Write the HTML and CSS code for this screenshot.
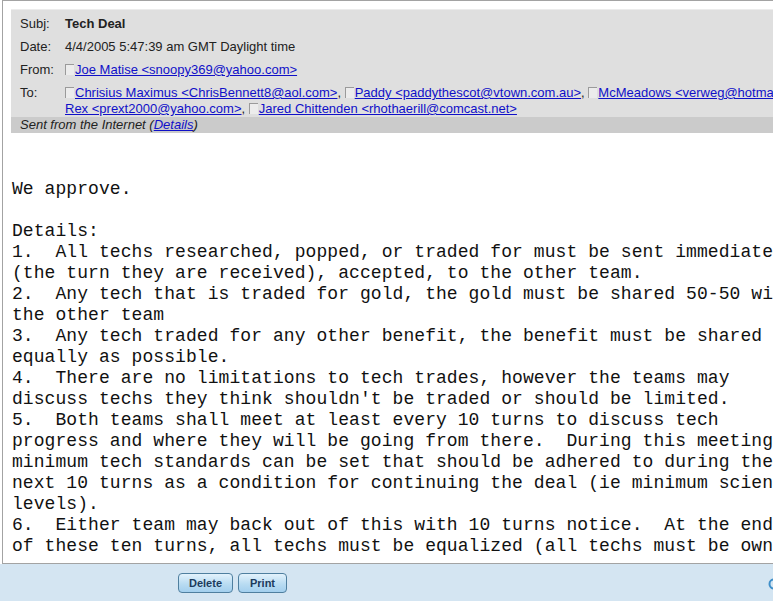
FILE: index.html
```html
<!DOCTYPE html>
<html>
<head>
<meta charset="utf-8">
<title>Tech Deal</title>
<link rel="stylesheet" href="styles.css">
</head>
<body>
<div class="page">
  <div class="panel">
    <div class="header">
      <div class="row"><span class="label">Subj:</span><span class="value subject">Tech Deal</span></div>
      <div class="row"><span class="label">Date:</span><span class="value">4/4/2005 5:47:39 am GMT Daylight time</span></div>
      <div class="row"><span class="label">From:</span><span class="value"><span class="cb"></span><a href="#">Joe Matise &lt;snoopy369@yahoo.com&gt;</a></span></div>
      <div class="row"><span class="label">To:</span><span class="value"><span class="line"><span class="cb"></span><a href="#">Chrisius Maximus &lt;ChrisBennett8@aol.com&gt;</a>, <span class="cb"></span><a href="#">Paddy &lt;paddythescot@vtown.com.au&gt;</a>, <span class="cb"></span><a href="#">McMeadows &lt;verweg@hotmail.com&gt;</a>, <span class="cb"></span></span><span class="line"><a href="#">Rex &lt;prext2000@yahoo.com&gt;</a>, <span class="cb"></span><a href="#">Jared Chittenden &lt;rhothaerill@comcast.net&gt;</a></span></span></div>
      <div class="sent">Sent from the Internet (<a href="#">Details</a>)</div>
    </div>
    <pre class="message">


We approve.

Details:
1.  All techs researched, popped, or traded for must be sent immediately
(the turn they are received), accepted, to the other team.
2.  Any tech that is traded for gold, the gold must be shared 50-50 with
the other team
3.  Any tech traded for any other benefit, the benefit must be shared as
equally as possible.
4.  There are no limitations to tech trades, however the teams may
discuss techs they think shouldn't be traded or should be limited.
5.  Both teams shall meet at least every 10 turns to discuss tech
progress and where they will be going from there.  During this meeting,
minimum tech standards can be set that should be adhered to during the
next 10 turns as a condition for continuing the deal (ie minimum science
levels).
6.  Either team may back out of this with 10 turns notice.  At the end
of these ten turns, all techs must be equalized (all techs must be owned</pre>
  </div>
  <div class="footer">
    <button class="btn btn-delete">Delete</button>
    <button class="btn btn-print">Print</button>
    <span class="ring"><svg width="12" height="12" viewBox="0 0 12 12"><circle cx="6" cy="6" r="4.5" fill="none" stroke="#3f8fc9" stroke-width="2"/></svg></span>
  </div>
</div>
</body>
</html>
```
FILE: styles.css
```css
html, body {
  margin: 0;
  padding: 0;
  background: #ffffff;
  overflow: hidden;
}
.page {
  width: 773px;
  height: 601px;
  display: flex;
  flex-direction: column;
  overflow: hidden;
}
.panel {
  flex: none;
  margin-left: 2px;
  border-top: 1px solid #a3a3a3;
  border-left: 1px solid #a3a3a3;
  border-bottom: 1px solid #a3a3a3;
  padding: 8px 0 0 8px;
  box-sizing: border-box;
  height: 564px;
  overflow: hidden;
  display: flex;
  flex-direction: column;
}
.header {
  flex: none;
  background: #dfdfdf;
  border-top: 1px solid #ececec;
  font-family: "Liberation Sans", Arial, sans-serif;
  font-size: 13px;
  color: #222222;
  white-space: nowrap;
  overflow: hidden;
}
.row {
  display: flex;
  margin-top: 6px;
  line-height: 16px;
  padding-left: 9px;
}
.row + .row {
  margin-top: 7px;
}
.label {
  width: 45px;
  flex: none;
}
.value {
  display: block;
}
.value .line {
  display: block;
}
.subject {
  font-weight: bold;
}
.header a {
  color: #1010c8;
  text-decoration: underline;
}
.cb {
  display: inline-block;
  width: 8px;
  height: 10px;
  border-top: 1px solid #9a9a9a;
  border-left: 1px solid #9a9a9a;
  background: #ececec;
  margin-right: 1px;
  vertical-align: -1px;
}
.sent {
  background: #cbcbcb;
  line-height: 16px;
  font-style: italic;
  padding-left: 9px;
}
.message {
  flex: none;
  margin: 4px 0 0 0;
  padding-left: 1px;
  font-family: "Liberation Mono", "Courier New", monospace;
  font-size: 18px;
  letter-spacing: 0.07px;
  line-height: 21px;
  color: #111111;
  white-space: pre;
}
.footer {
  flex: 1;
  background: #d4e5f2;
  display: flex;
  align-items: flex-start;
  padding: 9px 0 0 178px;
  gap: 5px;
  overflow: hidden;
}
.btn {
  height: 20px;
  padding: 0;
  border: 1px solid #4f7f9f;
  border-radius: 4px;
  background: linear-gradient(#e3f2fc, #b9dcf2 55%, #a3cfee);
  font-family: "Liberation Sans", Tahoma, sans-serif;
  font-weight: bold;
  font-size: 11px;
  color: #1c3b5c;
}
.btn-delete {
  width: 55px;
}
.btn-print {
  width: 49px;
}
.ring {
  margin-left: auto;
  margin-right: -7px;
  margin-top: 3px;
  width: 12px;
  height: 12px;
}
```
